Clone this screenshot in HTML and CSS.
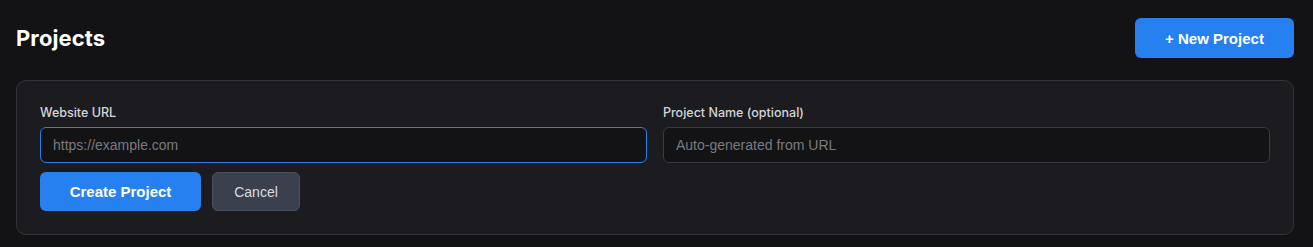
FILE: index.html
```html
<!DOCTYPE html>
<html lang="en">
<head>
    <meta charset="UTF-8">
    <meta name="viewport" content="width=device-width, initial-scale=1.0">
    <title>Projects</title>
    <link rel="stylesheet" href="styles.css">
</head>
<body>
    <div class="page">
        <header class="page-header">
            <h1 class="page-title">Projects</h1>
            <button class="btn btn-primary btn-new">+ New Project</button>
        </header>

        <!-- New project form -->
        <div class="form-card">
            <div class="form-row">
                <div class="form-group">
                    <label for="websiteUrl">Website URL</label>
                    <input type="url" id="websiteUrl" class="input" placeholder="https://example.com" autofocus>
                </div>
                <div class="form-group">
                    <label for="projectName">Project Name (optional)</label>
                    <input type="text" id="projectName" class="input" placeholder="Auto-generated from URL">
                </div>
            </div>
            <div class="form-actions">
                <button class="btn btn-primary btn-create">Create Project</button>
                <button class="btn btn-cancel">Cancel</button>
            </div>
        </div>
    </div>
</body>
</html>
```

FILE: styles.css
```css
:root {
    --bg: #131315;
    --card: #1c1c20;
    --border: #34343a;
    --primary: #2780f0;
    --text: #ffffff;
    --label: #d4d4d8;
    --muted: #7a7a80;
}

* {
    margin: 0;
    padding: 0;
    box-sizing: border-box;
}

body {
    background: var(--bg);
    font-family: Inter, 'Noto Sans', sans-serif;
    color: var(--text);
}

.page {
    padding: 18px 19px 0 16px;
}

.page-header {
    display: flex;
    align-items: center;
    justify-content: space-between;
    height: 40px;
    margin-bottom: 22px;
}

.page-title {
    font-size: 22px;
    font-weight: 700;
    letter-spacing: 0.1px;
    margin-top: -1px;
}

.btn {
    font-family: 'Liberation Sans', Arial, sans-serif;
    font-size: 14px;
    border: none;
    border-radius: 6px;
    cursor: pointer;
}

.btn-primary {
    background: var(--primary);
    color: white;
    font-size: 15px;
    font-weight: 700;
}

.btn-new {
    height: 40px;
    width: 159px;
}

.form-card {
    background: var(--card);
    border: 1px solid var(--border);
    border-radius: 10px;
    padding: 23px;
}

.form-row {
    display: grid;
    grid-template-columns: 1fr 1fr;
    gap: 16px;
}

.form-group label {
    display: block;
    font-size: 12.5px;
    font-weight: 500;
    color: var(--label);
    line-height: 18px;
    margin-bottom: 5px;
}

.input {
    width: 100%;
    height: 36px;
    padding: 0 12px;
    background: #131316;
    border: 1px solid #3a3a40;
    border-radius: 6px;
    font-family: 'Liberation Sans', Arial, sans-serif;
    font-size: 14px;
    color: white;
    caret-color: white;
}

.input::placeholder {
    color: var(--muted);
}

.input:focus {
    outline: none;
    border-color: var(--primary);
}

.form-actions {
    display: flex;
    gap: 11px;
    margin-top: 9px;
}

.btn-create {
    height: 39px;
    width: 161px;
}

.btn-cancel {
    height: 39px;
    width: 88px;
    background: #3a404d;
    border: 1px solid #4b515e;
    color: #dcdde0;
}
```
